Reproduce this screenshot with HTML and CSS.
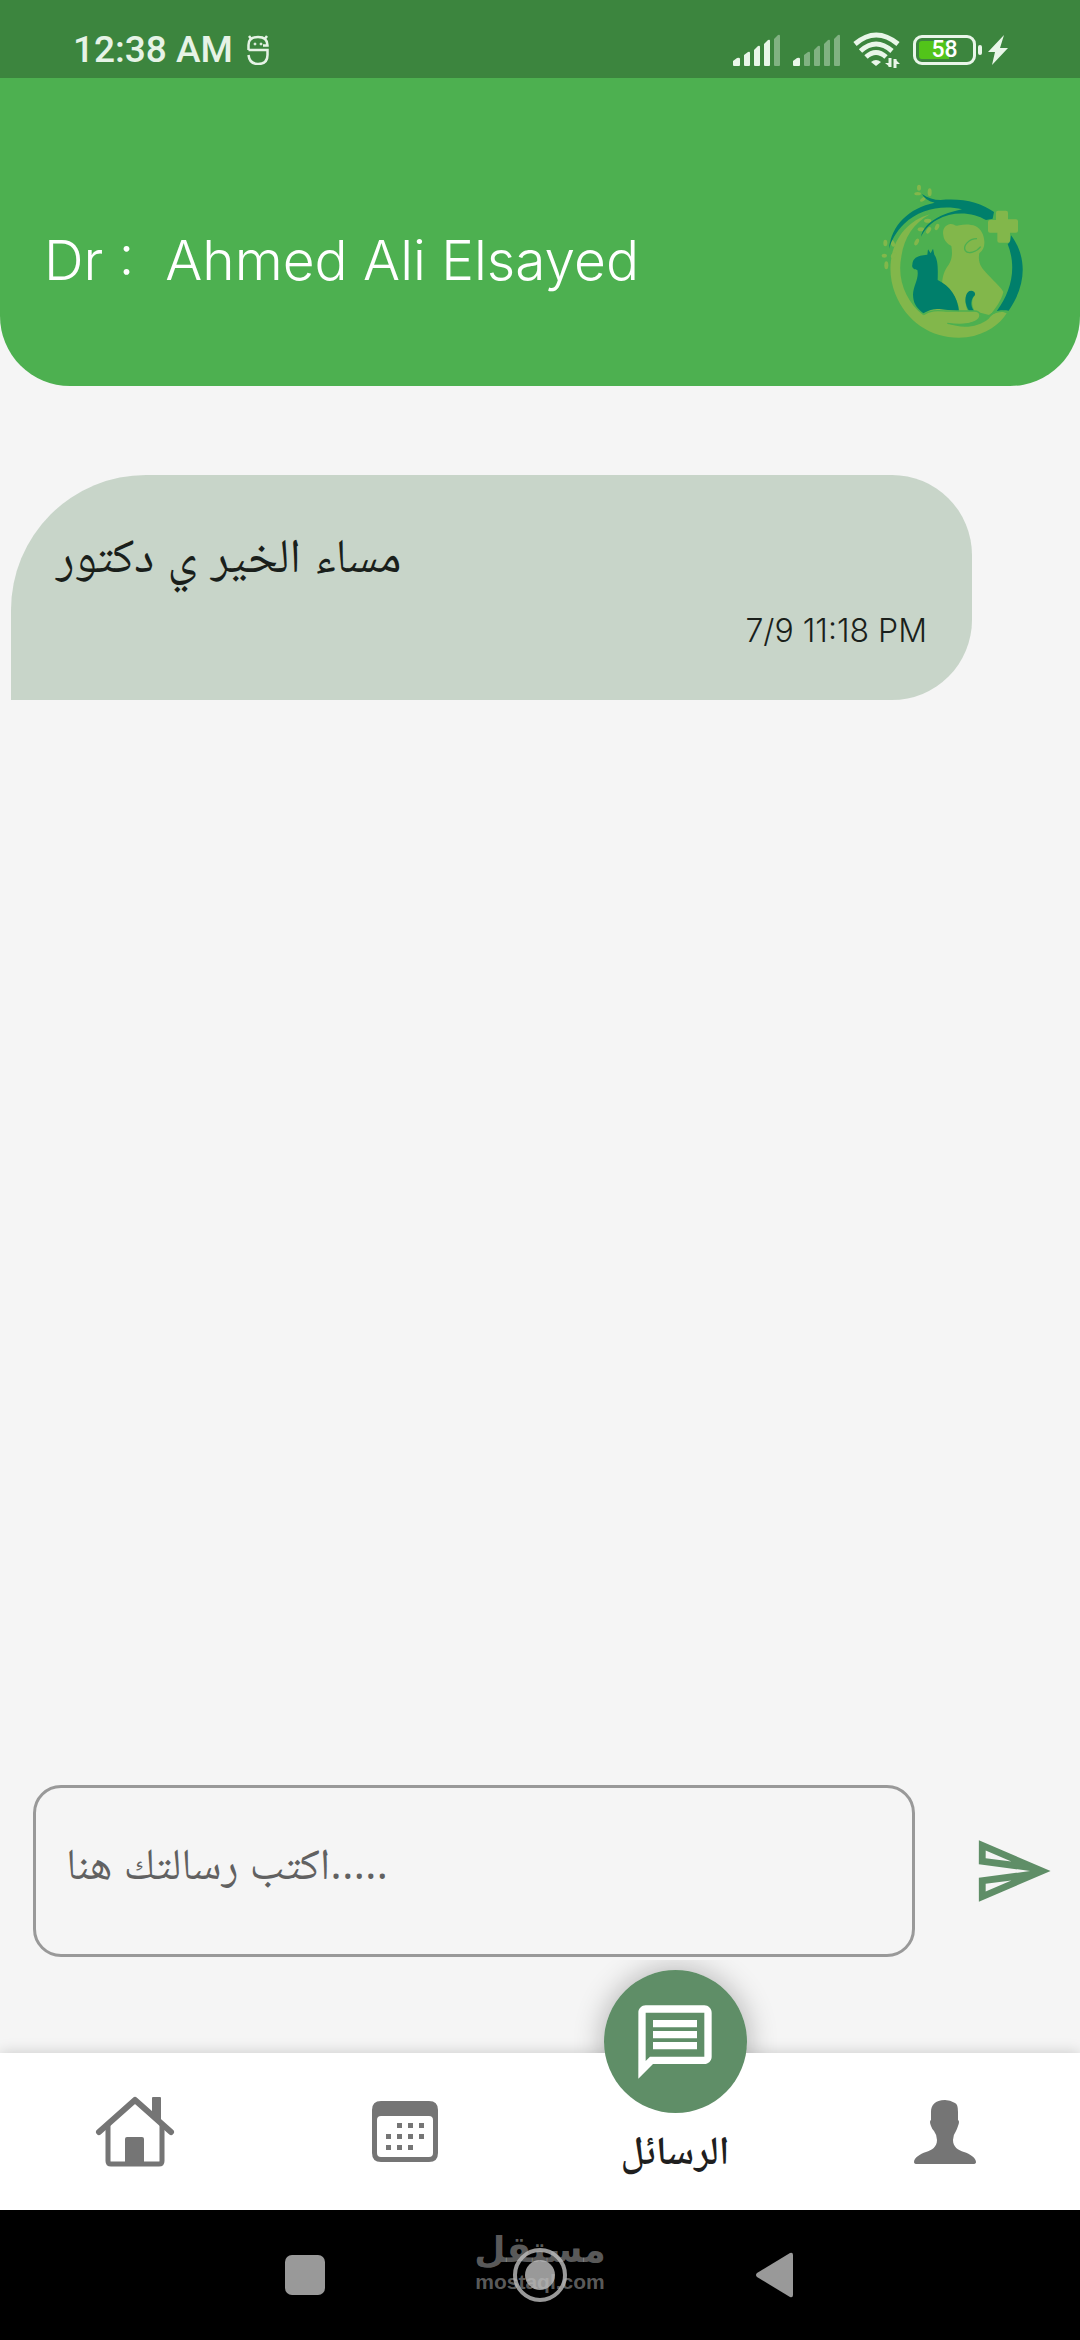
FILE: index.html
```html
<!DOCTYPE html>
<html lang="ar" dir="ltr">
<head>
<meta charset="utf-8">
<meta name="viewport" content="width=device-width, initial-scale=1">
<title>الرسائل</title>
<link rel="stylesheet" href="styles.css">
</head>
<body>
<div class="status">
  <span class="clock">12:38 AM</span>
  <svg class="face" width="22" height="30" viewBox="0 0 22 30" fill="none" stroke="#e6f3e6" stroke-width="2.500">
    <path d="M2 1l3 4M20 1l-3 4M1.500 15V10Q1.500 2 11 2T20.500 10.500H16M1.500 15H20.500V20Q20.500 29 11 29Q2.500 29 1.500 20"/>
    <circle cx="8" cy="9" r="1" fill="#e6f3e6" stroke-width="1"/><circle cx="14" cy="9" r="1" fill="#e6f3e6" stroke-width="1"/>
  </svg>
  <div class="indicators">
    <svg width="48" height="32" viewBox="0 0 48 32" fill="#e9f6e9">
      <path d="M0 27l4-3q3-1 3 1v6q0 1-1 1H1q-1 0-1-1zM11 21l4-3q2-1 2 1v12q0 1-1 1h-4q-1 0-1-1zM21 16l4-4q2-1 2 1v18q0 1-1 1h-4q-1 0-1-1zM31 10l4-4q2-1 2 1v24q0 1-1 1h-4q-1 0-1-1z"/>
      <path opacity=".4" d="M41 5l4-4q2-1 2 1v29q0 1-1 1h-4q-1 0-1-1z"/>
    </svg>
    <svg width="48" height="32" viewBox="0 0 48 32" fill="#e9f6e9">
      <path d="M0 27l4-3q3-1 3 1v6q0 1-1 1H1q-1 0-1-1z"/>
      <path opacity=".4" d="M11 21l4-3q2-1 2 1v12q0 1-1 1h-4q-1 0-1-1zM21 16l4-4q2-1 2 1v18q0 1-1 1h-4q-1 0-1-1zM31 10l4-4q2-1 2 1v24q0 1-1 1h-4q-1 0-1-1zM41 5l4-4q2-1 2 1v29q0 1-1 1h-4q-1 0-1-1z"/>
    </svg>
    <svg width="48" height="36" viewBox="0 0 48 36" fill="none" stroke="#e9f6e9" stroke-width="5">
      <path d="M2 12Q23-6 45 12M7.500 19Q23 5 39 19M13 25Q23 16 33 25"/>
      <path d="M18 30Q23 26 28 30L23 34z" fill="#e9f6e9" stroke="none"/>
      <path d="M37 26v9M42 36v-9" stroke-width="3"/><path d="M32 31h5v4zM42 27l5 5h-5z" fill="#e9f6e9" stroke="none"/>
    </svg>
    <div class="battery"><span class="level">58</span></div>
    <svg class="bolt" width="20" height="30" viewBox="0 0 20 30" fill="#e9f6e9"><path d="M16 0L0 17h7L4 30 20 13h-8z"/></svg>
  </div>
</div>

<header class="header">
  <h1 class="doctor">Dr :  Ahmed Ali Elsayed</h1>
  <svg class="logo" width="190" height="180" viewBox="0 0 570 540">
    <g fill="#82b74b">
      <path d="M210 133C110 160 66 270 106 372C142 462 226 512 320 502C380 494 420 462 440 430C420 418 398 430 386 446C352 474 304 476 262 460C300 466 350 462 360 442C364 426 350 422 334 424L250 418C224 414 204 422 188 434C140 396 110 330 124 260C132 204 160 160 210 133z"/>
      <path d="M250 196C246 178 256 164 272 162C284 162 284 170 298 166C316 162 334 164 346 168C364 176 372 196 373 214C374 228 370 240 358 250C352 280 366 296 384 314C406 338 424 352 430 366C424 392 408 412 390 436L344 424C332 400 336 388 346 372C340 360 322 362 318 378C314 396 318 412 324 424L298 424C296 390 274 358 246 342C248 318 252 302 266 284C276 270 278 250 274 228C262 222 252 212 250 196z"/>
      <path d="M408 128q0-6 6-6h24q6 0 6 6v20h24q6 0 6 6v28q0 6-6 6h-18v24q0 6-6 6h-26q-6 0-6-6v-24h-22q-6 0-6-6v-26q0-6 6-6h18z"/>
      <g>
        <ellipse cx="177" cy="53" rx="6" ry="9"/><ellipse cx="173" cy="71" rx="10" ry="5"/><ellipse cx="209" cy="67" rx="6" ry="12"/><ellipse cx="189" cy="88" rx="10" ry="5" transform="rotate(-35 189 88)"/>
        <ellipse cx="76" cy="219" rx="6" ry="10"/><ellipse cx="98" cy="220" rx="6" ry="11" transform="rotate(-25 98 220)"/><ellipse cx="73" cy="257" rx="8" ry="6"/><ellipse cx="79" cy="286" rx="6" ry="12"/><ellipse cx="101" cy="256" rx="7" ry="10" transform="rotate(35 101 256)"/>
        <ellipse cx="203" cy="152" rx="11" ry="6"/><ellipse cx="183" cy="178" rx="10" ry="6"/><ellipse cx="206" cy="181" rx="6" ry="11" transform="rotate(30 206 181)"/><ellipse cx="170" cy="216" rx="6" ry="11" transform="rotate(25 170 216)"/><ellipse cx="231" cy="171" rx="6" ry="10" transform="rotate(25 231 171)"/>
      </g>
    </g>
    <g fill="#007f6b">
      <path d="M87 236C94 166 146 114 224 98C206 94 194 86 186 72C204 84 222 90 242 90C310 84 362 98 402 126L398 146L378 150C340 128 282 120 230 150C206 164 192 182 183 200C190 168 222 136 306 118C250 104 178 116 132 162C108 186 94 212 87 236z"/>
      <path d="M453 196C496 252 506 336 446 422C434 420 422 420 410 424C452 366 472 296 443 222C452 218 452 206 453 196z"/>
      <path d="M204 238l8 12 7-14 4 18C234 270 234 292 233 330C270 348 292 378 297 424L244 418C222 414 204 422 190 430C166 410 160 398 159 374C160 346 178 326 172 300C164 300 154 294 157 284C158 266 168 256 202 254z"/>
      <path d="M342 422C334 412 330 396 340 380C350 374 344 362 334 362C318 362 314 386 318 402Q322 418 328 422z"/>
    </g>
    <path d="M351 206C326 206 308 228 316 242C324 254 350 246 362 230" fill="none" stroke="#4db050" stroke-width="4"/>
    <path d="M190 434C214 418 238 422 258 423H342C366 422 364 446 346 454C322 466 288 464 262 460M378 448Q396 422 430 424" fill="none" stroke="#4db050" stroke-width="4"/>
  </svg>
</header>

<main class="chat">
  <article class="bubble">
    <p class="message" dir="rtl">مساء الخير ي دكتور</p>
    <time class="sent">7/9 11:18 PM</time>
  </article>
</main>

<form class="composer">
  <input class="field" type="text" dir="ltr" aria-label="اكتب رسالتك هنا" placeholder="اكتب رسالتك هنا.....">
  <button class="send" type="button" aria-label="إرسال">
    <svg width="82" height="82" viewBox="0 0 24 24" fill="#5f8e67"><path d="M4.010 6.030l7.510 3.220-7.520-1 .01-2.220m7.500 8.720L4 17.970v-2.220l7.510-1M2.010 3L2 10l15 2-15 2 .01 7L23 12 2.010 3z"/></svg>
  </button>
</form>

<nav class="tabs">
  <a class="tab" href="#home" aria-label="الرئيسية">
    <svg width="80" height="72" viewBox="0 0 80 72" fill="none" stroke="#757575" stroke-width="6" stroke-linecap="round" stroke-linejoin="round">
      <path d="M4 36L40 4l36 32"/><path d="M13 30v35q0 3 3 3h48q3 0 3-3V30" stroke-width="5"/>
      <path d="M30 69V43q0-2 2-2h15q2 0 2 2v26zM57 17V2q0-1 1-1h7q1 0 1 1v23z" fill="#757575" stroke="none"/>
    </svg>
  </a>
  <a class="tab" href="#calendar" aria-label="المواعيد">
    <svg width="68" height="62" viewBox="0 0 68 62" fill="#757575">
      <path fill-rule="evenodd" d="M10 0h48q9 0 9 9v43q0 9-9 9H10q-9 0-9-9V9q0-9 9-9zM10 15q-4 0-4 4v33q0 4 4 4h48q4 0 4-4V19q0-4-4-4z"/>
      <path d="M26 22h5v5h-5zM37 22h5v5h-5zM48 22h5v5h-5zM15 33h5v5h-5zM26 33h5v5h-5zM37 33h5v5h-5zM48 33h5v5h-5zM15 44h5v5h-5zM26 44h5v5h-5zM37 44h5v5h-5z"/>
    </svg>
  </a>
  <a class="tab current" href="#messages" aria-current="page">
    <span class="disc">
      <svg width="88" height="88" viewBox="0 0 24 24" fill="#fff"><path d="M4 4h16v12H5.170L4 17.170V4m0-2c-1.100 0-1.990.9-1.990 2L2 22l4-4h14c1.100 0 2-.9 2-2V4c0-1.100-.9-2-2-2H4zm2 10h12v2H6v-2zm0-3h12v2H6V9zm0-3h12v2H6V6z"/></svg>
    </span>
    <span class="label">الرسائل</span>
  </a>
  <a class="tab" href="#profile" aria-label="الملف الشخصي">
    <svg width="62" height="64" viewBox="0 0 62 64" fill="#757575"><path d="M31 0C21 0 17 5 17 12V20Q15 21 17 26Q18 29 20 31Q23 35 23 40C23 47 18 50 12 52C6 54 0 58 0 62Q0 64 3 64H59Q62 64 62 62C62 58 56 54 50 52C44 50 39 47 39 40Q39 35 42 31Q43 29 44 26Q46 21 44 20V12Q44 4 41 3Q36 0 31 0z"/></svg>
  </a>
</nav>

<div class="system">
  <button class="key" type="button" aria-label="Recent apps"><svg width="40" height="40" viewBox="0 0 40 40" fill="#999"><rect width="40" height="40" rx="7"/></svg></button>
  <button class="key" type="button" aria-label="Home"><svg width="56" height="56" viewBox="0 0 56 56"><circle cx="28" cy="28" r="25" fill="none" stroke="#999" stroke-width="4"/><circle cx="28" cy="28" r="15" fill="#999"/></svg></button>
  <button class="key" type="button" aria-label="Back"><svg width="38" height="46" viewBox="0 0 38 46" fill="#999"><path d="M1 21L34 1q3-1 3 2v40q0 3-3 2L1 25q-2-2 0-4z"/></svg></button>
  <div class="watermark"><span class="mark-ar">مستقل</span><span class="mark-en">mostaql.com</span></div>
</div>
</body>
</html>
```

FILE: styles.css
```css
* { box-sizing: border-box; }

body {
  margin: 0;
  min-height: 100vh;
  display: flex;
  flex-direction: column;
  background: #f5f5f5;
  color: #1a1f1b;
  font-family: Inter, "Noto Naskh Arabic", "Noto Sans Arabic", "DejaVu Sans", sans-serif;
}

svg { display: block; flex: none; }
button { padding: 0; border: 0; background: none; }

.status {
  display: flex;
  align-items: center;
  height: 78px;
  padding: 21px 72px 0 73px;
  background: #3c853e;
  color: #e6f3e6;
}
.clock { font: 500 37px/40px Roboto, sans-serif; }
.face { margin-left: 14px; }
.indicators { display: flex; align-items: center; gap: 12px; margin-left: auto; }
.battery {
  position: relative;
  width: 63px;
  height: 30px;
  padding: 3px;
  border: 3px solid #e9f6e9;
  border-radius: 9px;
}
.battery::after {
  content: "";
  position: absolute;
  top: 7px;
  right: -9px;
  width: 4px;
  height: 10px;
  border-radius: 2px;
  background: #e9f6e9;
}
.level {
  display: block;
  border-radius: 3px;
  background: linear-gradient(90deg, #52c41a 58%, transparent 58%);
  color: #fff;
  font: 500 23px/18px Roboto, sans-serif;
  text-align: center;
}

.header {
  display: flex;
  align-items: center;
  justify-content: space-between;
  height: 308px;
  padding: 56px 30px 0 44px;
  border-radius: 0 0 70px 70px;
  background: #4db050;
  color: #fff;
}
.doctor { margin: 0; font-size: 55px; line-height: 80px; font-weight: 300; white-space: pre; }

.chat { flex: 1; padding: 89px 10% 40px 11px; }
.bubble {
  display: flex;
  flex-direction: column;
  padding: 43px 45px 34px;
  border-radius: 135px 80px 80px 0;
  background: #c8d5c9;
}
.message { margin: 0; align-self: flex-start; font-size: 48px; line-height: 74px; }
.sent { align-self: flex-end; padding-top: 4px; font-size: 32px; line-height: 70px; font-weight: 300; }

.composer {
  display: flex;
  align-items: center;
  gap: 57px;
  padding: 0 26px 96px 33px;
}
.field {
  flex: 1;
  min-width: 0;
  height: 172px;
  padding: 0 30px 18px;
  border: 3px solid #999;
  border-radius: 28px;
  background: transparent;
  font: inherit;
  font-size: 44px;
  font-family: "Open Sans", "Noto Naskh Arabic", "Noto Sans Arabic", "DejaVu Sans", sans-serif;
}
.field::placeholder { color: #616161; opacity: 1; }

.tabs {
  position: relative;
  display: grid;
  grid-template-columns: repeat(4, 1fr);
  height: 157px;
  background: #fff;
  box-shadow: 0 0 14px rgba(0, 0, 0, .18);
}
.tab {
  position: relative;
  display: flex;
  align-items: center;
  justify-content: center;
  color: #1f1f1f;
  text-decoration: none;
}
.current { align-items: flex-end; }
.disc {
  position: absolute;
  top: -83px;
  display: grid;
  place-items: center;
  width: 143px;
  height: 143px;
  border-radius: 50%;
  background: #5f8e67;
}
.disc::before {
  content: "";
  position: absolute;
  z-index: -1;
  inset: 0;
  border-radius: 50%;
  box-shadow: 0 0 30px rgba(0, 0, 0, .3);
  clip-path: inset(-10px -40px 60px);
}
.label { font-size: 40px; line-height: 40px; font-weight: 600; padding-bottom: 40px; }

.system {
  position: relative;
  display: grid;
  grid-template-columns: repeat(3, 1fr);
  height: 130px;
  padding: 0 187px;
  background: #000;
}
.key { display: grid; place-items: center; }
.watermark {
  position: absolute;
  inset: 20px 0 auto;
  display: flex;
  flex-direction: column;
  align-items: center;
  color: rgba(190, 190, 190, .48);
  pointer-events: none;
}
.mark-ar { font: 700 36px/40px "DejaVu Sans", sans-serif; }
.mark-en { font: 700 21px/24px "Liberation Sans", sans-serif; }
```
